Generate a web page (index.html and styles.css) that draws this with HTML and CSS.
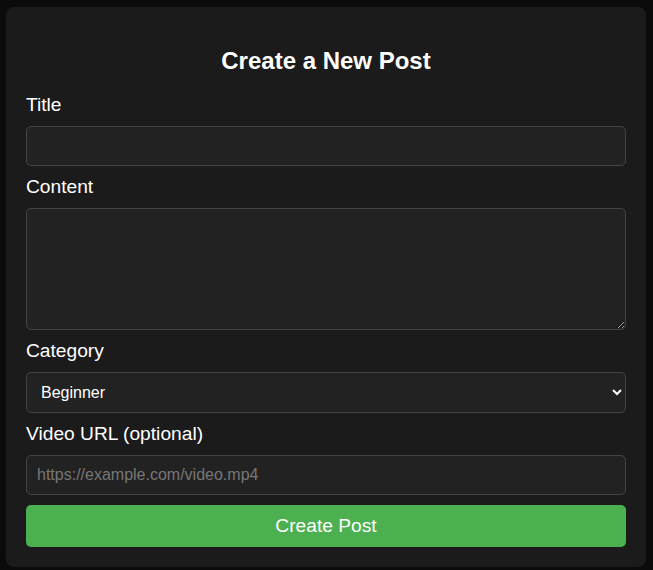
FILE: index.html
```html
<!DOCTYPE html>
<html lang="en">
<head>
<meta charset="utf-8">
<title>Create a New Post</title>
<link rel="stylesheet" href="styles.css">
</head>
<body>
<div class="card">
  <h2 class="heading">Create a New Post</h2>
  <form class="form">
    <label class="label" for="title">Title</label>
    <input class="field" id="title" type="text">
    <label class="label" for="content">Content</label>
    <textarea class="field area" id="content"></textarea>
    <label class="label" for="category">Category</label>
    <select class="field select" id="category">
      <option>Beginner</option>
      <option>Intermediate</option>
      <option>Advanced</option>
    </select>
    <label class="label" for="video">Video URL (optional)</label>
    <input class="field" id="video" type="text" placeholder="https://example.com/video.mp4">
    <button class="submit" type="button">Create Post</button>
  </form>
</div>
</body>
</html>
```
FILE: styles.css
```css
html, body {
  margin: 0;
  padding: 0;
  background: #0b0b0b;
  font-family: "Liberation Sans", Arial, sans-serif;
  color: #fff;
}
body {
  padding-top: 7px;
}
.card {
  box-sizing: border-box;
  width: 640px;
  margin: 0 0 0 6px;
  background: #1b1b1b;
  border-radius: 8px;
  padding: 20px;
}
.heading {
  margin: 20px 0;
  font-size: 24px;
  font-weight: bold;
  text-align: center;
  line-height: 27px;
}
.form {
  display: flex;
  flex-direction: column;
  gap: 10px;
}
.label {
  display: block;
  font-size: 19.2px;
  line-height: 22px;
}
.field {
  box-sizing: border-box;
  width: 100%;
  height: 40px;
  margin: 0;
  padding: 10px;
  background: #222;
  color: #fff;
  border: 1px solid #444;
  border-radius: 5px;
  font-family: "Liberation Sans", Arial, sans-serif;
  font-size: 16px;
  outline: none;
  color-scheme: dark;
}
.field::placeholder {
  color: #777;
}
.area {
  height: 122px;
  resize: vertical;
  display: block;
}
.select {
  height: 41px;
}
.submit {
  height: 42px;
  padding: 10px;
  background: #4caf50;
  color: #fff;
  border: none;
  border-radius: 5px;
  font-family: "Liberation Sans", Arial, sans-serif;
  font-size: 19.2px;
  line-height: 22px;
  cursor: pointer;
}
```
